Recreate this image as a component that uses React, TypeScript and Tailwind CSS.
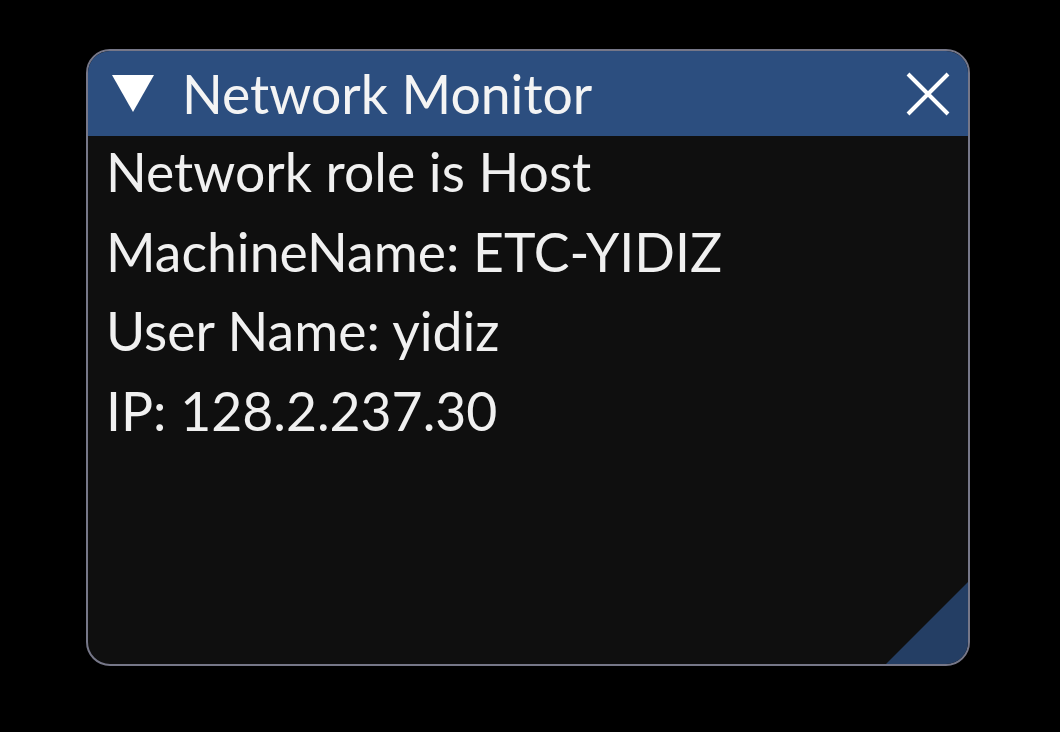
const lines = [
  'Network role is Host',
  'MachineName: ETC-YIDIZ',
  'User Name: yidiz',
  'IP: 128.2.237.30',
]

export default function App() {
  return (
    <div className="flex h-[732px] w-[1060px] bg-black pl-[86px] pt-[49px] font-['Lato',sans-serif]">
      <div className="relative flex h-[617px] w-[884px] flex-col overflow-hidden rounded-[24px] border-2 border-[#767788] bg-[#0f0f0f]">
        {/* title bar */}
        <div className="flex h-[85px] shrink-0 items-center bg-[#2c4e7f] pl-[24px] pr-[18px] text-white">
          <svg width="42" height="38" viewBox="0 0 42 38" className="shrink-0">
            <polygon points="0,0 42,0 21,37" fill="white" />
          </svg>
          <span className="ml-[28px] text-[53.5px] leading-none text-[#f4f4f4]">Network Monitor</span>
          <svg width="44" height="44" viewBox="0 0 44 44" className="ml-auto shrink-0">
            <path d="M2 2 L42 42 M42 2 L2 42" stroke="white" strokeWidth="4" />
          </svg>
        </div>

        {/* content */}
        <div className="flex flex-col pl-[18px] pt-0 -mt-[4px] text-[53.5px] leading-[79.5px] text-[#f0f0f0]">
          {lines.map((l) => (
            <div key={l}>{l}</div>
          ))}
        </div>

        {/* resize grip */}
        <svg width="82" height="82" viewBox="0 0 82 82" className="absolute bottom-0 right-0">
          <polygon points="82,0 82,82 0,82" fill="#243e64" />
        </svg>
      </div>
    </div>
  )
}
